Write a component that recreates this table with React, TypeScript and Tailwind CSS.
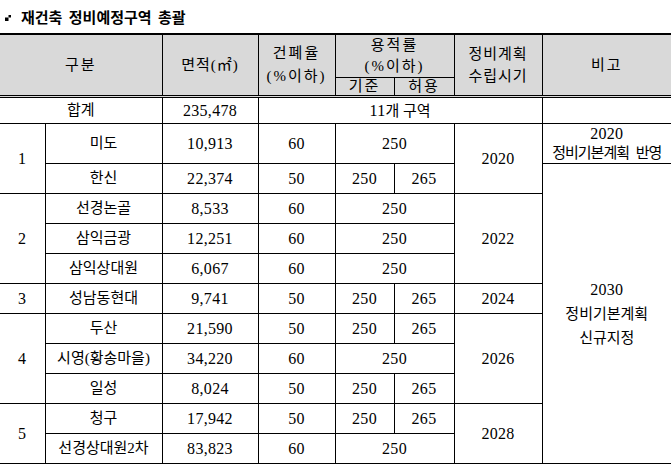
const td = "border-b border-r border-black text-center align-middle p-0 font-normal";
const num = "text-[16px] tracking-[0.3px]";
const last = "border-b border-black text-center align-middle p-0 font-normal";

type Row = {
  group?: { label: string; span: number };
  name: string;
  area: string;
  bcr: string;
  far: [string] | [string, string];
  year?: { label: string; span: number };
};

const rows: Row[] = [
  { group: { label: "1", span: 2 }, name: "미도", area: "10,913", bcr: "60", far: ["250"], year: { label: "2020", span: 2 } },
  { name: "한신", area: "22,374", bcr: "50", far: ["250", "265"] },
  { group: { label: "2", span: 3 }, name: "선경논골", area: "8,533", bcr: "60", far: ["250"], year: { label: "2022", span: 3 } },
  { name: "삼익금광", area: "12,251", bcr: "60", far: ["250"] },
  { name: "삼익상대원", area: "6,067", bcr: "60", far: ["250"] },
  { group: { label: "3", span: 1 }, name: "성남동현대", area: "9,741", bcr: "50", far: ["250", "265"], year: { label: "2024", span: 1 } },
  { group: { label: "4", span: 3 }, name: "두산", area: "21,590", bcr: "50", far: ["250", "265"], year: { label: "2026", span: 3 } },
  { name: "시영(황송마을)", area: "34,220", bcr: "60", far: ["250"] },
  { name: "일성", area: "8,024", bcr: "50", far: ["250", "265"] },
  { group: { label: "5", span: 2 }, name: "청구", area: "17,942", bcr: "50", far: ["250", "265"], year: { label: "2028", span: 2 } },
  { name: "선경상대원2차", area: "83,823", bcr: "60", far: ["250"] },
];

export default function App() {
  return (
    <div className="w-[671px] h-[464px] overflow-hidden bg-white text-black text-[15px] [font-family:'Liberation_Serif','Noto_Sans_CJK_KR',serif]">
      {/* title */}
      <div className="h-[33px] flex items-center pl-[5px] gap-[10px]">
        <svg width="6" height="6" viewBox="0 0 6 6" className="mt-[2px]">
          <rect x="0" y="2.5" width="3.5" height="3.5" fill="#000" />
          <rect x="3.5" y="0" width="2.5" height="2.5" fill="#000" />
        </svg>
        <h1 className="font-bold text-[15px] leading-none [word-spacing:3px] [font-family:'Noto_Sans_CJK_KR',sans-serif]">
          재건축 정비예정구역 총괄
        </h1>
      </div>

      <table className="w-[671px] table-fixed border-collapse border-t-2 border-black">
        <colgroup>
          <col className="w-[45px]" />
          <col className="w-[117px]" />
          <col className="w-[96px]" />
          <col className="w-[77px]" />
          <col className="w-[59px]" />
          <col className="w-[60px]" />
          <col className="w-[88px]" />
          <col className="w-[129px]" />
        </colgroup>
        <thead className="bg-[#d9d9d9]">
          <tr className="h-[43px]">
            <th colSpan={2} rowSpan={2} className={`${td} tracking-[2px]`}>구분</th>
            <th rowSpan={2} className={`${td} tracking-[1px]`}>면적(㎡)</th>
            <th rowSpan={2} className={`${td} leading-[23px] tracking-[2px]`}>
              건폐율
              <br />
              (%이하)
            </th>
            <th colSpan={2} className={`${td} leading-[21px] tracking-[2px]`}>
              용적률
              <br />
              (%이하)
            </th>
            <th rowSpan={2} className={`${td} leading-[22px] tracking-[1px]`}>
              정비계획
              <br />
              수립시기
            </th>
            <th rowSpan={2} className={`${last} tracking-[2px]`}>비고</th>
          </tr>
          <tr className="h-[18px]">
            <th className={`${td} leading-[17px] tracking-[2px]`}>기준</th>
            <th className={`${td} leading-[17px] tracking-[2px]`}>허용</th>
          </tr>
        </thead>
        <tbody>
          <tr className="h-[27px]">
            <td colSpan={2} className={`${td} border-t-[3px] border-double`}>합계</td>
            <td className={`${td} ${num} border-t-[3px] border-double`}>235,478</td>
            <td colSpan={4} className={`${td} border-t-[3px] border-double`}>
              <span className={num}>11</span>개 구역
            </td>
            <td className={`${last} border-t-[3px] border-double`} />
          </tr>
          {rows.map((r, i) => (
            <tr key={r.name} className={i === 0 ? "h-[39px]" : "h-[30px]"}>
              {r.group && (
                <td rowSpan={r.group.span} className={`${td} ${num}`}>
                  {r.group.label}
                </td>
              )}
              <td className={td}>{r.name}</td>
              <td className={`${td} ${num}`}>{r.area}</td>
              <td className={`${td} ${num}`}>{r.bcr}</td>
              {r.far.length === 1 ? (
                <td colSpan={2} className={`${td} ${num}`}>{r.far[0]}</td>
              ) : (
                <>
                  <td className={`${td} ${num}`}>{r.far[0]}</td>
                  <td className={`${td} ${num}`}>{r.far[1]}</td>
                </>
              )}
              {r.year && (
                <td rowSpan={r.year.span} className={`${td} ${num}`}>
                  {r.year.label}
                </td>
              )}
              {i === 0 && (
                <td className={`${last} leading-[19px] tracking-[-1px] [word-spacing:4px]`}>
                  <span className={num}>2020</span>
                  <br />
                  정비기본계획 반영
                </td>
              )}
              {i === 1 && (
                <td rowSpan={10} className={`${last} leading-[24px]`}>
                  <span className={num}>2030</span>
                  <br />
                  정비기본계획
                  <br />
                  신규지정
                </td>
              )}
            </tr>
          ))}
        </tbody>
      </table>
    </div>
  );
}
